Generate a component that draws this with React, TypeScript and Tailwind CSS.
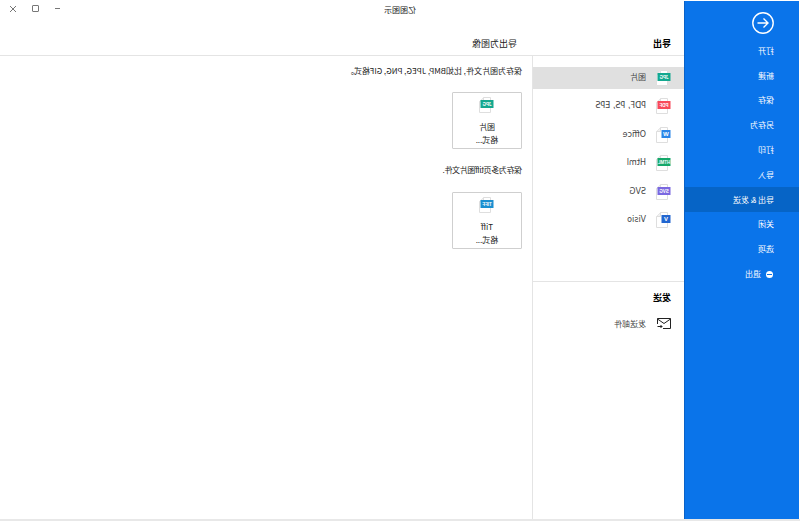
const sidebarItems = ["打开", "新建", "保存", "另存为", "打印", "导入", "导出 & 发送", "关闭", "选项"];

const exportItems = [
  { label: "图片", tag: "JPG", color: "#14a88f", wide: true, active: true },
  { label: "PDF, PS, EPS", tag: "PDF", color: "#f8495a", wide: true, active: false },
  { label: "Office", tag: "W", color: "#2b86e8", wide: false, active: false },
  { label: "Html", tag: "HTML", color: "#15a86a", wide: true, active: false },
  { label: "SVG", tag: "SVG", color: "#7a68e0", wide: true, active: false },
  { label: "Visio", tag: "V", color: "#2266d0", wide: false, active: false },
];

function FileIcon({ tag, color, wide }: { tag: string; color: string; wide: boolean }) {
  const tagWidth = wide ? 13 : 9;
  return (
    <svg width="15" height="16" viewBox="0 0 15 16" className="shrink-0">
      <path d="M3.5 0.5H10.5L14.5 4.5V15.5H3.5Z" fill="#fff" stroke="#dedede" />
      <path d="M10.5 0.5V4.5H14.5" fill="#f0f0f0" stroke="#dedede" />
      <rect x="0.5" y="3" width={tagWidth} height="8" fill={color} />
      <text
        x={0.5 + tagWidth / 2}
        y="8.8"
        textAnchor="middle"
        fontSize={wide ? "4.5" : "6"}
        fontWeight="700"
        fill="#fff"
        fontFamily="'Liberation Sans', sans-serif"
      >
        {tag}
      </text>
    </svg>
  );
}

function ExportButton({ tag, color, title }: { tag: string; color: string; title: string }) {
  return (
    <div className="flex h-[57px] w-[70px] flex-col items-center rounded-[1px] border border-[#cfcfcf] pt-[4px] text-[8px] leading-[13px] text-[#222]">
      <FileIcon tag={tag} color={color} wide />
      <span className="mt-[7px]">{title}</span>
      <span>格式...</span>
    </div>
  );
}

export default function App() {
  return (
    <div
      className="flex h-[521px] w-[800px] -scale-x-100 overflow-hidden border-b-2 border-[#e8e8e8] bg-white pt-[1px] pl-[1px] text-[8px]"
      style={{ fontFamily: "'Noto Sans CJK SC', 'Noto Sans', sans-serif" }}
    >
      {/* sidebar */}
      <aside className="flex w-[115px] shrink-0 flex-col border-r border-[#0a62c8] bg-[#0a74ea] pt-[11px] text-white">
        <div className="mb-[4.5px] pl-[25px]">
          <svg width="22" height="22" viewBox="0 0 22 22" fill="none" stroke="#fff">
            <circle cx="11" cy="11" r="10.2" strokeWidth="1.4" />
            <path d="M16.5 11H6M10.5 6.5L6 11L10.5 15.5" strokeWidth="1.4" />
          </svg>
        </div>
        {sidebarItems.map((item) => (
          <div
            key={item}
            className={`flex h-[24.8px] items-center pl-[25px] ${item === "导出 & 发送" ? "bg-[#0664c6]" : ""}`}
          >
            {item}
          </div>
        ))}
        <div className="flex h-[24.8px] items-center gap-[5px] pl-[26px]">
          <span className="flex h-[7px] w-[7px] items-center justify-center rounded-full bg-white">
            <span className="h-[1px] w-[5px] bg-[#0a74ea]" />
          </span>
          退出
        </div>
      </aside>

      <div className="flex min-w-0 flex-1 flex-col">
        {/* title bar */}
        <div className="flex h-[17px] shrink-0 items-center">
          <span className="flex-1 pr-[47px] text-center text-[#222]">亿图图示</span>
          <div className="mb-[2px] flex w-[69px] items-center justify-between pr-[9px] pl-[9px]">
            <span className="h-[1px] w-[5px] bg-[#777]" />
            <span className="h-[7px] w-[7px] rounded-[1px] border border-[#777]" />
            <svg width="8" height="8" viewBox="0 0 8 8" stroke="#666">
              <path d="M1 1L7 7M7 1L1 7" strokeWidth="0.9" />
            </svg>
          </div>
        </div>

        {/* headings */}
        <div className="flex h-[38px] shrink-0 items-center border-b border-[#e4e4e4] pt-[14px] text-[9px]">
          <div className="w-[152px] pl-[13px] font-bold text-black">导出</div>
          <div className="pl-[15px] text-[#222]">导出为图像</div>
        </div>

        <div className="flex min-h-0 flex-1">
          {/* export types */}
          <div className="flex w-[152px] shrink-0 flex-col border-r border-[#e4e4e4] pt-[8px]">
            <div className="flex h-[217px] flex-col">
              {exportItems.map((item) => (
                <div key={item.label} className="flex h-[28.5px] shrink-0 items-center">
                  <div
                    className={`mb-[1px] flex h-[22px] w-full items-center gap-[10px] pl-[13px] text-[#444] ${item.active ? "bg-[#e0e0e0]" : ""}`}
                    style={{ fontFamily: "'DejaVu Sans', 'Noto Sans CJK SC', sans-serif" }}
                  >
                    <FileIcon tag={item.tag} color={item.color} wide={item.wide} />
                    <span>{item.label}</span>
                  </div>
                </div>
              ))}
            </div>
            <div className="border-t border-[#e4e4e4] pt-[9px] pl-[13px]">
              <div className="text-[9px] font-bold text-black">发送</div>
              <div className="mt-[13px] flex items-center gap-[11px] text-[#444]">
                <svg width="14" height="11" viewBox="0 0 14 11" fill="none" stroke="#222">
                  <path d="M8 10.5H0.5V0.5H13.5V6" />
                  <path d="M0.5 1L7 5.5L13.5 1" />
                  <path d="M13.5 8.5H9M10.5 7L9 8.5L10.5 10" />
                </svg>
                <span>发送邮件</span>
              </div>
            </div>
          </div>

          {/* export options */}
          <div className="flex-1 pt-[9px] pl-[10px] text-[#222]">
            <p>保存为图片文件, 比如BMP, JPEG, PNG, GIF格式。</p>
            <div className="mt-[15px]">
              <ExportButton tag="JPG" color="#14a88f" title="图片" />
            </div>
            <p className="mt-[15px] tracking-[-0.4px]">保存为多页tiff图片文件.</p>
            <div className="mt-[16px]">
              <ExportButton tag="TIFF" color="#1a8fd0" title="Tiff" />
            </div>
          </div>
        </div>
      </div>
    </div>
  );
}
